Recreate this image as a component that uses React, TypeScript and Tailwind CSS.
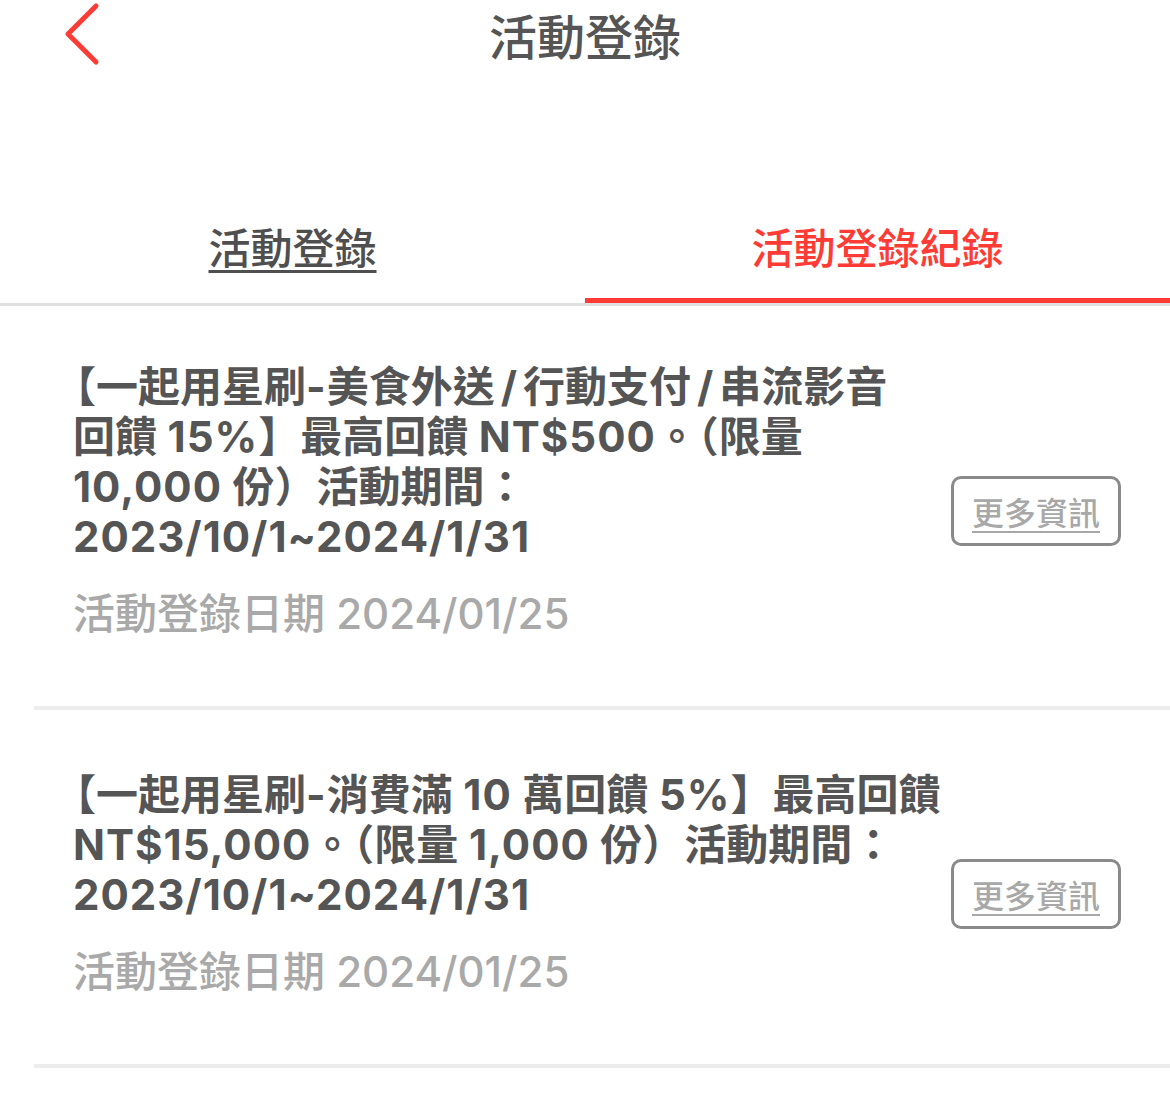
import React from "react";

const font = { fontFamily: '"Noto Sans CJK TC", "Noto Sans", sans-serif' };
const mixed = { fontFamily: 'Inter, "Noto Sans CJK TC", sans-serif' };

function MoreButton() {
  return (
    <button className="mt-[20px] flex h-[70px] w-[170px] shrink-0 items-center justify-center rounded-[10px] border-[3px] border-[#8a8a8a] bg-white text-[32px] font-medium leading-none text-[#a8a8a8] underline decoration-[2px] underline-offset-[6px]">
      更多資訊
    </button>
  );
}

function Card({ lines, date, pt }: { lines: React.ReactNode[]; date: string; pt: string }) {
  return (
    <div className={`ml-[34px] flex items-center border-b-[4px] border-[#ededed] pb-[67px] pl-[39px] pr-[49px] ${pt}`}>
      <div className="flex-1" style={mixed}>
        <div className="text-[42px] font-semibold leading-[50px] text-[#555555]">
          {lines.map((l, i) => (
            <div key={i} className="whitespace-nowrap">
              {l}
            </div>
          ))}
        </div>
        <div className="mt-[27px] text-[42px] font-medium leading-[50px] text-[#a9a9a9]">{date}</div>
      </div>
      <MoreButton />
    </div>
  );
}

const B = ({ children }: { children: React.ReactNode }) => (
  <span className="font-bold tracking-[1px]">{children}</span>
);
const Slash = () => <span className="mx-[6px] font-bold">/</span>;
const Open = () => <span className="-ml-[19px]">【</span>;

export default function App() {
  return (
    <div className="min-h-[1096px] w-[1170px] bg-white" style={font}>
      <div className="relative flex h-[72px] items-center justify-center">
        <svg
          className="absolute left-[62px] top-[2px]"
          width="40"
          height="64"
          viewBox="0 0 40 64"
          fill="none"
        >
          <polyline
            points="34,4 6,32 34,60"
            stroke="#fe3b35"
            strokeWidth="5"
            strokeLinecap="round"
            strokeLinejoin="round"
          />
        </svg>
        <h1 className="-mt-[4px] text-[48px] font-medium leading-none text-[#555555]">活動登錄</h1>
      </div>

      <div className="mt-[146px] grid grid-cols-2">
        <div className="flex flex-col items-center">
          <span className="text-[42px] font-medium leading-[56px] text-[#4f4f4f] underline decoration-[3px] underline-offset-[6px]">
            活動登錄
          </span>
          <div className="mt-[24px] h-[5px] w-full" />
        </div>
        <div className="flex flex-col items-center">
          <span className="text-[42px] font-medium leading-[56px] text-[#fe3b35]">活動登錄紀錄</span>
          <div className="mt-[24px] h-[5px] w-full bg-[#fe3b35]" />
        </div>
      </div>
      <div className="h-[3px] w-full bg-[#e0e0e0]" />

      <Card
        pt="pt-[56px]"
        lines={[
          <>
            <Open />
            一起用星刷<B>-</B>美食外送<Slash />行動支付<Slash />串流影音
          </>,
          <>
            回饋 <B>15%</B>】最高回饋 <B>NT$500</B>。（限量
          </>,
          <>
            <B>10,000</B> 份）活動期間：
          </>,
          <>
            <B>2023/10/1~2024/1/31</B>
          </>,
        ]}
        date="活動登錄日期 2024/01/25"
      />
      <Card
        pt="pt-[60px]"
        lines={[
          <>
            <Open />
            一起用星刷<B>-</B>消費滿 <B>10</B> 萬回饋 <B>5%</B>】最高回饋
          </>,
          <>
            <B>NT$15,000</B>。（限量 <B>1,000</B> 份）活動期間：
          </>,
          <>
            <B>2023/10/1~2024/1/31</B>
          </>,
        ]}
        date="活動登錄日期 2024/01/25"
      />
    </div>
  );
}
